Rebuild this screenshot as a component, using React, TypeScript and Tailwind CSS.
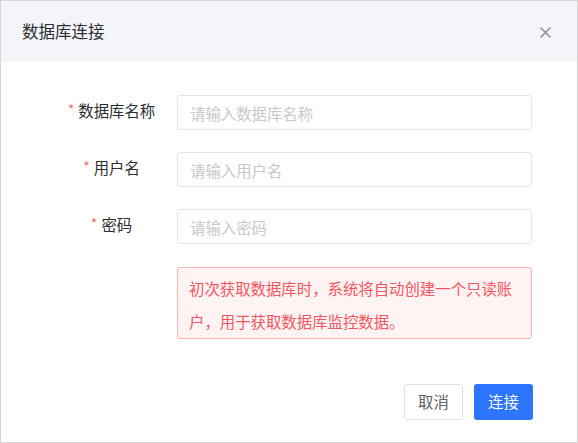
import React from "react";

const font = { fontFamily: '"Noto Sans CJK SC", "Noto Sans", sans-serif' };

function Field({ label, placeholder }: { label: string; placeholder: string }) {
  return (
    <>
      <div className="flex h-[35px] items-center justify-center whitespace-nowrap pb-[3px] text-[15.4px] text-[#2b2d31]">
        <span className="mr-[4px] -mt-[5px] text-[14px] leading-none text-[#f56c6c]">*</span>
        <span>{label}</span>
      </div>
      <input
        className="h-[35px] w-[355px] rounded-[3px] border border-[#e4e4ea] bg-white px-[12px] text-[15.4px] text-[#303133] outline-none placeholder:text-[#c6c8ce]"
        placeholder={placeholder}
      />
    </>
  );
}

export default function App() {
  return (
    <div
      className="flex h-[443px] w-[578px] flex-col overflow-hidden border border-[#d6d6d9] bg-white"
      style={font}
    >
      <div className="flex h-[61px] shrink-0 items-center justify-between bg-[#f4f5f9] pl-[21px] pr-[26px]">
        <span className="text-[16.5px] text-[#2b2d31]">数据库连接</span>
        <svg width="11" height="11" viewBox="0 0 11 11" className="mt-[2px]">
          <path d="M1 1L10 10M10 1L1 10" stroke="#8f9196" strokeWidth="1.6" strokeLinecap="round" />
        </svg>
      </div>

      <div className="grid grid-cols-[87px_355px] gap-x-[22px] gap-y-[22px] pl-[67px] pt-[33px]">
        <Field label="数据库名称" placeholder="请输入数据库名称" />
        <Field label="用户名" placeholder="请输入用户名" />
        <Field label="密码" placeholder="请输入密码" />
        <div />
        <div className="mt-[1px] rounded-[3px] border border-[#ffb4b6] bg-[#fff3f3] px-[11px] pt-[4px] pb-[0px] text-[15.4px] leading-[33px] text-[#f4565f]">
          初次获取数据库时，系统将自动创建一个只读账户，用于获取数据库监控数据。
        </div>
      </div>

      <div className="mt-auto flex justify-end gap-[11px] pb-[22px] pr-[44px]">
        <button className="h-[36px] w-[59px] rounded-[3px] border border-[#dcdfe6] bg-white text-[15.4px] text-[#606266]">
          取消
        </button>
        <button className="h-[36px] w-[59px] rounded-[3px] bg-[#2d74fe] text-[15.4px] text-white">
          连接
        </button>
      </div>
    </div>
  );
}
